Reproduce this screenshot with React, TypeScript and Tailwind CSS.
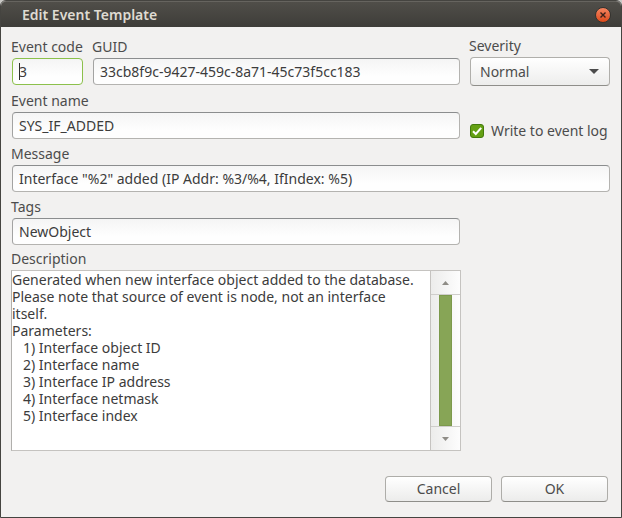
import { ReactNode, useState } from "react";

const inputClass =
  "mx-px block h-[27px] min-w-0 rounded-[4px] border border-[#b4b3b0] border-t-[#8b8d8e] border-l-[#a3a3a2] bg-linear-to-b from-[#f5f5f5] to-[#fefefe] to-70% px-1.5 text-sm text-[#3c3c3c] outline-none";

const buttonClass =
  "h-[26px] w-[107px] rounded-[4px] border border-[#aeada9] border-b-[#8f8e8a] bg-linear-to-b from-white to-[#ececeb] text-sm leading-none text-[#4c4c4c]";

function Field({ id, label, className = "", children }: { id: string; label: string; className?: string; children: ReactNode }) {
  return (
    <div className={`flex flex-col ${className}`}>
      <label htmlFor={id} className="h-5 text-sm leading-[18px] whitespace-nowrap">
        {label}
      </label>
      {children}
    </div>
  );
}

const description = `Generated when new interface object added to the database.
Please note that source of event is node, not an interface
itself.
Parameters:
   1) Interface object ID
   2) Interface name
   3) Interface IP address
   4) Interface netmask
   5) Interface index`;

export default function App() {
  const [writeToLog, setWriteToLog] = useState(true);

  return (
    <div className="bg-[#c9c8c5] font-['Noto_Sans','Open_Sans',sans-serif] text-[#4c4c4c]">
      <div className="flex min-h-screen flex-col rounded-t-[6px] border border-[#454440] bg-[#f2f1f0]">
        <header className="flex h-[26px] items-center justify-between rounded-t-[5px] border-t border-[#66645f] bg-linear-to-b from-[#504e49] to-[#3e3d39] pr-2.5 pl-[21px]">
          <h1 className="text-sm leading-none font-semibold text-[#dfdbd2]">Edit Event Template</h1>
          <button
            type="button"
            aria-label="Close"
            className="flex size-4 items-center justify-center rounded-full border border-[#35332f] bg-linear-to-b from-[#f4845f] to-[#dd4814]"
          >
            <svg viewBox="0 0 6 6" className="size-1.5" fill="none" stroke="#3a2019" strokeWidth="1.4">
              <path d="M.5 .5 5.5 5.5M5.5 .5 .5 5.5" />
            </svg>
          </button>
        </header>

        <form className="flex flex-col gap-1.5 px-2.5 pt-2.5" onSubmit={(e) => e.preventDefault()}>
          <div className="grid grid-cols-[1fr_142px] gap-x-2 gap-y-1.5">
            <div className="flex items-center gap-2">
              <Field id="code" label="Event code" className="w-[73px] shrink-0">
                <div className="relative flex">
                  <input
                    id="code"
                    defaultValue="3"
                    className="mx-px block h-[27px] w-full min-w-0 rounded-[4px] border border-[#8cc04b] bg-linear-to-b from-[#f5f5f5] to-[#fefefe] to-70% px-1.5 text-sm text-[#3c3c3c] outline-none"
                  />
                  <span className="absolute top-[5px] left-2 h-[17px] w-px bg-[#2b2b2b]" />
                </div>
              </Field>
              <Field id="guid" label="GUID" className="min-w-0 flex-1">
                <input id="guid" readOnly defaultValue="33cb8f9c-9427-459c-8a71-45c73f5cc183" className={inputClass} />
              </Field>
            </div>
            <Field id="severity" label="Severity">
              <div className="relative mx-px">
                <select
                  id="severity"
                  defaultValue="Normal"
                  className="block h-[29px] w-full appearance-none rounded-[4px] border border-[#b0afab] border-b-[#8f8e8a] bg-linear-to-b from-white to-[#ededec] pl-[9px] text-sm text-[#4c4c4c] outline-none"
                >
                  <option>Normal</option>
                  <option>Warning</option>
                  <option>Minor</option>
                  <option>Major</option>
                  <option>Critical</option>
                </select>
                <svg viewBox="0 0 10 5" className="pointer-events-none absolute top-3 right-[11px] h-[5px] w-2.5" fill="#4c4c4c">
                  <path d="M0 0h10L5 5z" />
                </svg>
              </div>
            </Field>

            <Field id="name" label="Event name">
              <input id="name" defaultValue="SYS_IF_ADDED" className={inputClass} />
            </Field>
            <div className="flex items-end">
              <label className="ml-px flex h-4 items-center gap-[7px] text-sm leading-4 whitespace-nowrap">
                <span className="relative flex size-3.5 shrink-0">
                  <input
                    type="checkbox"
                    checked={writeToLog}
                    onChange={(e) => setWriteToLog(e.target.checked)}
                    className="size-3.5 appearance-none rounded-[3px] border border-[#b0afab] bg-white checked:border-[#437a0c] checked:bg-[#64a013]"
                  />
                  {writeToLog && (
                    <svg viewBox="0 0 14 14" className="pointer-events-none absolute inset-0 size-3.5" fill="none" stroke="#fff" strokeWidth="2">
                      <path d="M3 7.2 5.8 10 11.2 3.8" />
                    </svg>
                  )}
                </span>
                Write to event log
              </label>
            </div>
          </div>

          <Field id="message" label="Message">
            <input id="message" defaultValue={'Interface "%2" added (IP Addr: %3/%4, IfIndex: %5)'} className={inputClass} />
          </Field>

          <div className="mr-[150px] flex flex-col gap-[5px]">
            <Field id="tags" label="Tags">
              <input id="tags" defaultValue="NewObject" className={inputClass} />
            </Field>
            <Field id="description" label="Description">
              <div className="flex h-[181px] border border-[#c5c3c0] border-l-[#b0afac] bg-white">
                <textarea
                  id="description"
                  defaultValue={description}
                  className="block min-w-0 flex-1 resize-none overflow-hidden text-sm leading-[17px] whitespace-pre text-[#3c3c3c] outline-none"
                />
                <div className="flex w-[30px] flex-col border-l border-[#c5c3c0] bg-linear-to-r from-[#ececeb] to-[#fdfdfd]">
                  <button type="button" aria-label="Scroll up" className="flex h-6 items-center justify-center border-b border-[#cfcecb]">
                    <svg viewBox="0 0 7 4" className="h-1 w-[7px]" fill="#8e8c86">
                      <path d="M0 4h7L3.5 0z" />
                    </svg>
                  </button>
                  <div className="mx-2 flex-1 bg-[#87a556] outline outline-[#7c994c] -outline-offset-1" />
                  <button type="button" aria-label="Scroll down" className="flex h-6 items-center justify-center border-t border-[#cfcecb]">
                    <svg viewBox="0 0 7 4" className="h-1 w-[7px]" fill="#8e8c86">
                      <path d="M0 0h7L3.5 4z" />
                    </svg>
                  </button>
                </div>
              </div>
            </Field>
          </div>

          <div className="mt-[19px] mr-[3px] mb-3.5 flex justify-end gap-[9px]">
            <button type="button" className={buttonClass}>
              Cancel
            </button>
            <button type="submit" className={buttonClass}>
              OK
            </button>
          </div>
        </form>
      </div>
    </div>
  );
}
